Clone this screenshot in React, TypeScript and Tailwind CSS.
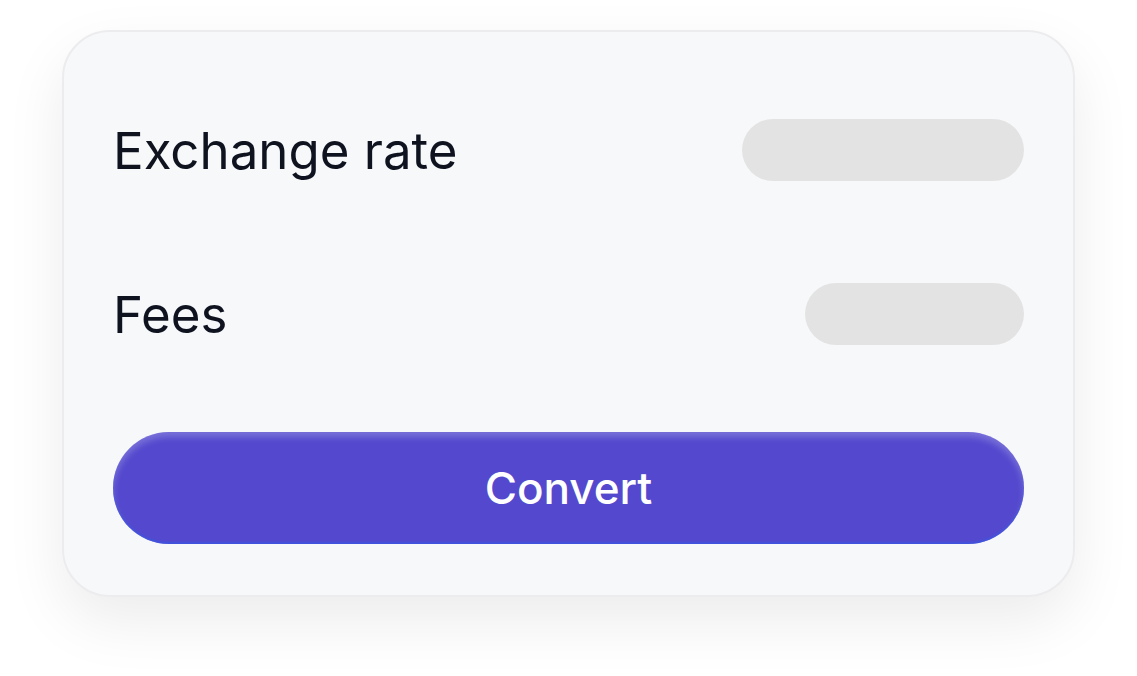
export default function App() {
  return (
    <div className="min-h-[676px] bg-white pt-[30px] font-['Inter',sans-serif]">
      <div className="mx-[62px] rounded-[48px] border-2 border-[#ececee] bg-[#f7f8fa] px-[49px] pt-[48px] pb-[51px] shadow-[0_24px_60px_rgba(0,0,0,0.08)]">
        <div className="flex h-[140px] items-center justify-between">
          <span className="text-[51px] leading-none text-[#0f1320]">Exchange rate</span>
          <div className="h-[62px] w-[282px] rounded-full bg-[#e3e3e3]" />
        </div>
        <div className="mt-[24px] flex h-[140px] items-center justify-between">
          <span className="text-[51px] leading-none text-[#0f1320]">Fees</span>
          <div className="h-[62px] w-[219px] rounded-full bg-[#e3e3e3]" />
        </div>
        <button className="mt-[48px] flex h-[112px] w-full items-center justify-center rounded-full bg-[#5449ce] text-[44px] font-medium text-white shadow-[inset_0_5px_6px_rgba(255,255,255,0.22),inset_0_-2px_2px_rgba(50,90,230,0.6)]">
          Convert
        </button>
      </div>
    </div>
  );
}
